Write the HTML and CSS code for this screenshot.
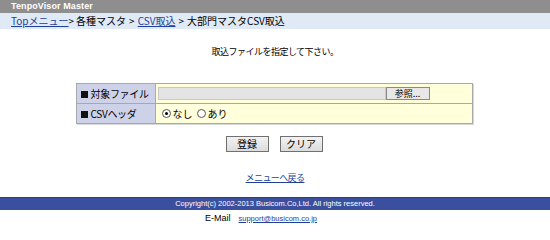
FILE: index.html
```html
<!DOCTYPE html>
<html lang="ja">
<head>
<meta charset="utf-8">
<title>TenpoVisor Master</title>
<link rel="stylesheet" href="styles.css">
</head>
<body>
<div class="page">
  <div class="titlebar">TenpoVisor Master</div>
  <div class="crumbs">
    <a href="#" class="lnk">Topメニュー</a><span class="sep">&gt;</span>各種マスタ<span class="sep2">&gt;</span><a href="#" class="lnk">CSV取込</a><span class="sep2">&gt;</span>大部門マスタCSV取込
  </div>
  <main class="content">
    <p class="lead">取込ファイルを指定して下さい。</p>
    <table class="form">
      <tr>
        <th><span class="sq"></span>対象ファイル</th>
        <td>
          <div class="file">
            <span class="filebox"></span>
            <span class="browse">参照...</span>
          </div>
        </td>
      </tr>
      <tr>
        <th><span class="sq"></span>CSVヘッダ</th>
        <td>
          <div class="radios">
            <span class="radio on"></span><span class="rlabel">なし</span>
            <span class="radio"></span><span class="rlabel">あり</span>
          </div>
        </td>
      </tr>
    </table>
    <div class="buttons">
      <span class="btn b1">登録</span>
      <span class="btn b2">クリア</span>
    </div>
    <div class="back"><a href="#" class="lnk">メニューへ戻る</a></div>
  </main>
  <footer>
    <div class="copy">Copyright(c) 2002-2013 Busicom.Co,Ltd. All rights reserved.</div>
    <div class="mail"><span class="ml">E-Mail</span><a href="#" class="lnk">support@busicom.co.jp</a></div>
  </footer>
</div>
</body>
</html>
```

FILE: styles.css
```css
html, body {
  margin: 0;
  padding: 0;
  background: #ffffff;
}
body {
  font-family: "Noto Sans CJK JP", "DejaVu Sans", sans-serif;
  font-size: 10px;
  color: #000;
}
.page {
  width: 550px;
  height: 226px;
  display: flex;
  flex-direction: column;
  overflow: hidden;
}
.titlebar {
  height: 13px;
  background: #8e8e8e;
  color: #fff;
  font-family: "Liberation Sans", Arial, sans-serif;
  font-weight: bold;
  font-size: 9px;
  line-height: 13px;
  padding-left: 11px;
  letter-spacing: 0.1px;
}
.crumbs {
  height: 16px;
  background: #dfeaf6;
  line-height: 16px;
  padding-left: 11px;
  font-size: 10px;
  white-space: nowrap;
}
.lnk {
  color: #1f3f9a;
  text-decoration: underline;
}
.sep { margin: 0 2px 0 0; }
.sep2 { margin: 0 3px; }
.content {
  display: flex;
  flex-direction: column;
  align-items: center;
}
.lead {
  margin: 16px 0 0 0;
  height: 14px;
  line-height: 14px;
  font-size: 9px;
  letter-spacing: -0.5px;
}
.form {
  margin-top: 24px;
  margin-left: -2px;
  width: 397px;
  border-collapse: collapse;
  border: 1px solid #a8a8a8;
  box-shadow: 1px 1px 0 #d8d8d8;
}
.form th, .form td {
  border: 1px solid #a8a8a8;
  height: 19px;
  padding: 0;
}
.form th {
  width: 74px;
  background: #ced2e8;
  text-align: left;
  font-weight: normal;
  font-size: 10px;
  padding-left: 4px;
  white-space: nowrap;
  letter-spacing: -0.3px;
}
.form td {
  background: #ffffdc;
}
.sq {
  display: inline-block;
  width: 7px;
  height: 7px;
  background: #111;
  margin-right: 3px;
}
.file {
  display: flex;
  align-items: center;
  padding-left: 2px;
}
.filebox {
  width: 226px;
  height: 11px;
  background: #e4e4e4;
  border: 1px solid #c8c8c8;
}
.browse {
  width: 42px;
  height: 11px;
  background: #e8e8e8;
  border: 1px solid #8a8a8a;
  font-size: 9px;
  line-height: 11px;
  text-align: center;
}
.radios {
  display: flex;
  align-items: center;
  padding-left: 6px;
}
.radio {
  width: 9px;
  height: 9px;
  border: 1px solid #555;
  border-radius: 50%;
  background: #fff;
  position: relative;
  box-sizing: border-box;
  margin-right: 2px;
}
.radio.on::after {
  content: "";
  position: absolute;
  left: 2px;
  top: 2px;
  width: 3px;
  height: 3px;
  border-radius: 50%;
  background: #000;
}
.rlabel { margin-right: 4px; }
.buttons {
  display: flex;
  gap: 11px;
  margin-top: 12px;
  margin-left: -2px;
}
.btn {
  width: 41px;
  height: 14px;
  border: 1px solid #707070;
  background: linear-gradient(#f2f2f2, #dcdcdc);
  text-align: center;
  line-height: 14px;
  font-size: 10px;
}
.back {
  margin-top: 19px;
  height: 14px;
  line-height: 14px;
  font-size: 9px;
  letter-spacing: -0.6px;
}
footer {
  margin-top: 12px;
}
.copy {
  height: 12px;
  background: #3a4f9e;
  color: #fff;
  font-family: "Liberation Sans", Arial, sans-serif;
  font-size: 7.5px;
  line-height: 12px;
  text-align: center;
  border-top: 1px solid #2c3c80;
}
.mail {
  text-align: center;
  font-size: 9px;
  line-height: 14px;
  padding-top: 1px;
  padding-right: 28px;
}
.ml {
  font-family: "Liberation Sans", Arial, sans-serif;
  margin-right: 8px;
}
.mail .lnk {
  font-family: "Liberation Sans", Arial, sans-serif;
  font-size: 7.5px;
}
```
